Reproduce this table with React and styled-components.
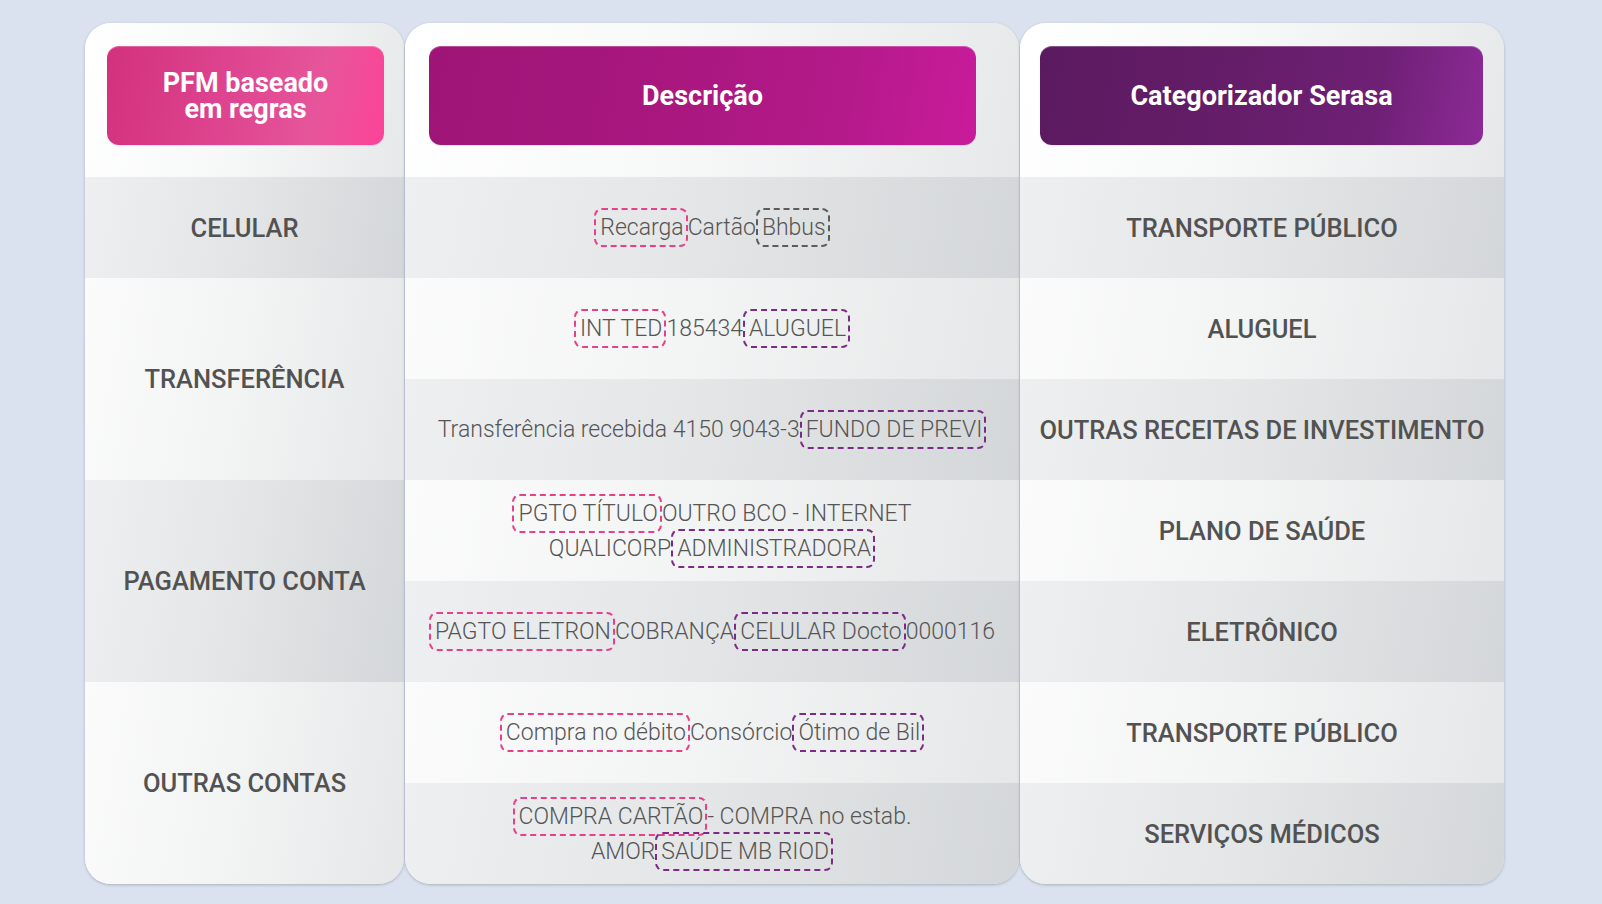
import styled, { createGlobalStyle } from 'styled-components';

const GlobalStyle = createGlobalStyle`
    html, body {
        margin: 0;
        padding: 0;
        background: #dbe2ef;
    }
    body {
        font-family: Roboto, "Liberation Sans", sans-serif;
    }
`

const Page = styled.div`
    width: 1602px;
    height: 904px;
    box-sizing: border-box;
    padding: 23px 0 0 85px;
    display: flex;
    gap: 1px;
    align-items: flex-start;
`

const Card = styled.section`
    width: ${p => p.$w}px;
    display: grid;
    grid-template-rows: 154px repeat(7, 101px);
    border-radius: 26px;
    overflow: hidden;
    background: #f3f4f4;
    box-shadow: 0 1px 3px rgba(70, 80, 100, 0.35);
`

const shades = {
    head: 'linear-gradient(100deg, #ffffff 0%, #f7f8f8 45%, #e7e8e9 100%)',
    light: 'linear-gradient(100deg, #fbfbfb 0%, #f3f4f4 45%, #e6e7e8 100%)',
    dark: 'linear-gradient(100deg, #eeeff0 0%, #e4e6e7 45%, #d4d7d9 100%)',
}

const HeadCell = styled.div`
    background: ${shades.head};
    padding: 23px ${p => p.$right}px 0 ${p => p.$left}px;
`

const Pill = styled.div`
    height: 99px;
    border-radius: 12px;
    display: flex;
    align-items: center;
    justify-content: center;
    text-align: center;
    color: #fff;
    font-size: 27px;
    font-weight: 700;
    line-height: 26px;
    background: ${p => p.$bg};
    box-shadow: inset 0 1px 0 rgba(255, 255, 255, 0.25), 0 1px 1px rgba(0, 0, 0, 0.08);
`

const Cell = styled.div`
    grid-row: span ${p => p.$span || 1};
    background: ${p => shades[p.$shade]};
    display: flex;
    align-items: center;
    justify-content: center;
    text-align: center;
`

const Label = styled.span`
    color: #525252;
    font-size: 25.5px;
    font-weight: 500;
`

const Desc = styled.p`
    margin: 0;
    color: #555;
    font-size: 23px;
    font-weight: 300;
    line-height: 35px;
    white-space: nowrap;
`

const boxColors = {
    pink: '#e6408c',
    purple: '#7b2a86',
    grey: '#5c5c5c',
}

const Mark = styled.span`
    display: inline;
    padding: 4px 2px 4px 4px;
    border: 2px dashed ${p => boxColors[p.$tone]};
    border-radius: 8px;
`

const gradients = {
    pfm: 'linear-gradient(100deg, #d3317d 0%, #de4590 45%, #e6559a 75%, #fd4498 100%)',
    desc: 'linear-gradient(100deg, #9e1577 0%, #a9177f 45%, #b41a8a 75%, #c91b9b 100%)',
    serasa: 'linear-gradient(100deg, #5b1a5f 0%, #651d69 45%, #6e2075 75%, #8c2a96 100%)',
}

const left = [
    { label: 'CELULAR', span: 1, shade: 'dark' },
    { label: 'TRANSFERÊNCIA', span: 2, shade: 'light' },
    { label: 'PAGAMENTO CONTA', span: 2, shade: 'dark' },
    { label: 'OUTRAS CONTAS', span: 2, shade: 'light' },
]

const descriptions = [
    [{ t: 'Recarga', m: 'pink' }, { t: 'Cartão' }, { t: 'Bhbus', m: 'grey' }],
    [{ t: 'INT TED', m: 'pink' }, { t: '185434' }, { t: 'ALUGUEL', m: 'purple' }],
    [{ t: 'Transferência recebida 4150 9043-3' }, { t: 'FUNDO DE PREVI', m: 'purple' }],
    [{ t: 'PGTO TÍTULO', m: 'pink' }, { t: 'OUTRO BCO - INTERNET' }, { br: true }, { t: 'QUALICORP' }, { t: 'ADMINISTRADORA', m: 'purple' }],
    [{ t: 'PAGTO ELETRON', m: 'pink' }, { t: 'COBRANÇA' }, { t: 'CELULAR Docto', m: 'purple' }, { t: '0000116' }],
    [{ t: 'Compra no débito', m: 'pink' }, { t: 'Consórcio' }, { t: 'Ótimo de Bil', m: 'purple' }],
    [{ t: 'COMPRA CARTÃO', m: 'pink' }, { t: '- COMPRA no estab.' }, { br: true }, { t: 'AMOR' }, { t: 'SAÚDE MB RIOD ', m: 'purple' }],
]

const categories = [
    'TRANSPORTE PÚBLICO',
    'ALUGUEL',
    'OUTRAS RECEITAS DE INVESTIMENTO',
    'PLANO DE SAÚDE',
    'ELETRÔNICO',
    'TRANSPORTE PÚBLICO',
    'SERVIÇOS MÉDICOS',
]

const shadeOf = i => (i % 2 === 0 ? 'dark' : 'light')

const App = () => {
    return (
        <>
            <GlobalStyle />
            <Page>
                <Card $w={319}>
                    <HeadCell $left={22} $right={20}>
                        <Pill $bg={gradients.pfm}>PFM baseado<br />em regras</Pill>
                    </HeadCell>
                    {left.map(row => (
                        <Cell key={row.label} $span={row.span} $shade={row.shade}>
                            <Label>{row.label}</Label>
                        </Cell>
                    ))}
                </Card>

                <Card $w={614}>
                    <HeadCell $left={24} $right={43}>
                        <Pill $bg={gradients.desc}>Descrição</Pill>
                    </HeadCell>
                    {descriptions.map((parts, i) => (
                        <Cell key={i} $shade={shadeOf(i)}>
                            <Desc>
                                {parts.map((p, j) =>
                                    p.br ? <br key={j} /> : p.m ? <Mark key={j} $tone={p.m}>{p.t}</Mark> : <span key={j}>{p.t}</span>
                                )}
                            </Desc>
                        </Cell>
                    ))}
                </Card>

                <Card $w={484}>
                    <HeadCell $left={20} $right={21}>
                        <Pill $bg={gradients.serasa}>Categorizador Serasa</Pill>
                    </HeadCell>
                    {categories.map((c, i) => (
                        <Cell key={i} $shade={shadeOf(i)}>
                            <Label>{c}</Label>
                        </Cell>
                    ))}
                </Card>
            </Page>
        </>
    )
}

export default App;
